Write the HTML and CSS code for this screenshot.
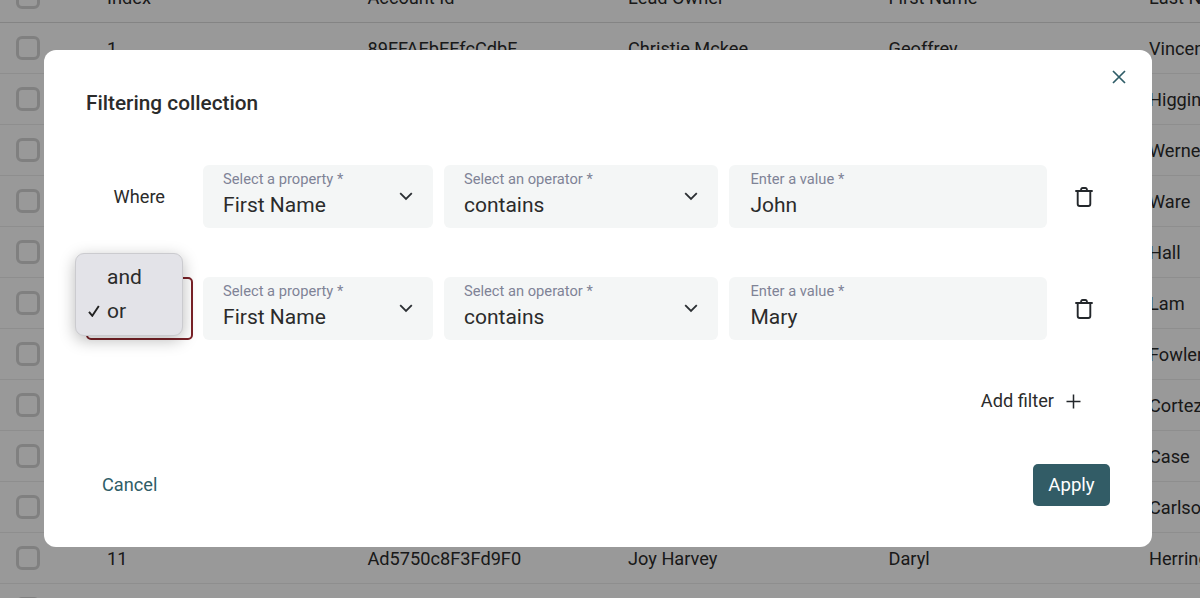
FILE: index.html
```html
<!DOCTYPE html>
<html lang="en">
<head>
  <meta charset="UTF-8" />
  <meta name="viewport" content="width=device-width, initial-scale=1.0"/>
  <title>Filtering collection</title>
  <link rel="stylesheet" href="styles.css">
</head>
<body>

  <div class="table">
    <div class="row head"><span class="check"></span><span>Index</span><span>Account Id</span><span>Lead Owner</span><span>First Name</span><span>Last Name</span></div>
    <div class="row"><span class="check"></span><span>1</span><span>89FFAEbEFfcCdbF</span><span>Christie Mckee</span><span>Geoffrey</span><span>Vincent</span></div>
    <div class="row"><span class="check"></span><span>2</span><span></span><span></span><span></span><span>Higgins</span></div>
    <div class="row"><span class="check"></span><span>3</span><span></span><span></span><span></span><span>Werner</span></div>
    <div class="row"><span class="check"></span><span>4</span><span></span><span></span><span></span><span>Ware</span></div>
    <div class="row"><span class="check"></span><span>5</span><span></span><span></span><span></span><span>Hall</span></div>
    <div class="row"><span class="check"></span><span>6</span><span></span><span></span><span></span><span>Lam</span></div>
    <div class="row"><span class="check"></span><span>7</span><span></span><span></span><span></span><span>Fowler</span></div>
    <div class="row"><span class="check"></span><span>8</span><span></span><span></span><span></span><span>Cortez</span></div>
    <div class="row"><span class="check"></span><span>9</span><span></span><span></span><span></span><span>Case</span></div>
    <div class="row"><span class="check"></span><span>10</span><span></span><span></span><span></span><span>Carlson</span></div>
    <div class="row"><span class="check"></span><span>11</span><span>Ad5750c8F3Fd9F0</span><span>Joy Harvey</span><span>Daryl</span><span>Herring</span></div>
    <div class="row"><span class="check"></span><span></span><span></span><span></span><span></span><span></span></div>
  </div>

  <div class="backdrop">
    <div class="modal">
      <button class="close" aria-label="Close">
        <svg width="14" height="14" viewBox="0 0 14 14"><path d="M1 1l12 12M13 1L1 13" fill="none" stroke="#2f5d67" stroke-width="1.7"/></svg>
      </button>

      <h2 class="title">Filtering collection</h2>

      <div class="filters">
        <div class="filter">
          <div class="where">Where</div>
          <div class="field">
            <label>Select a property *</label>
            <div class="value">First Name</div>
            <svg class="chev" width="14" height="9" viewBox="0 0 14 9"><path d="M1.2 1.2L7 7l5.8-5.8" fill="none" stroke="#2b2f33" stroke-width="1.8"/></svg>
          </div>
          <div class="field">
            <label>Select an operator *</label>
            <div class="value">contains</div>
            <svg class="chev" width="14" height="9" viewBox="0 0 14 9"><path d="M1.2 1.2L7 7l5.8-5.8" fill="none" stroke="#2b2f33" stroke-width="1.8"/></svg>
          </div>
          <div class="field input">
            <label>Enter a value *</label>
            <div class="value">John</div>
          </div>
          <svg class="trash" width="18" height="20" viewBox="0 0 18 20"><path d="M1 4h16M5.5 4l.6-1.8C6.3 1.5 6.9 1 7.6 1h2.8c.7 0 1.3.5 1.5 1.2l.6 1.8M2.7 4v13c0 1.1.9 2 2 2h8.6c1.1 0 2-.9 2-2V4" fill="none" stroke="#23272b" stroke-width="1.9" stroke-linecap="round"/></svg>
        </div>

        <div class="filter">
          <div class="conj">
            <div class="conj-box"></div>
            <div class="menu">
              <div class="opt">and</div>
              <div class="opt">
                <svg class="tick" width="12" height="12" viewBox="0 0 12 12"><path d="M1 6.8L4.3 10.8 10.8 1" fill="none" stroke="#222" stroke-width="1.9"/></svg>
                or
              </div>
            </div>
          </div>
          <div class="field">
            <label>Select a property *</label>
            <div class="value">First Name</div>
            <svg class="chev" width="14" height="9" viewBox="0 0 14 9"><path d="M1.2 1.2L7 7l5.8-5.8" fill="none" stroke="#2b2f33" stroke-width="1.8"/></svg>
          </div>
          <div class="field">
            <label>Select an operator *</label>
            <div class="value">contains</div>
            <svg class="chev" width="14" height="9" viewBox="0 0 14 9"><path d="M1.2 1.2L7 7l5.8-5.8" fill="none" stroke="#2b2f33" stroke-width="1.8"/></svg>
          </div>
          <div class="field input">
            <label>Enter a value *</label>
            <div class="value">Mary</div>
          </div>
          <svg class="trash" width="18" height="20" viewBox="0 0 18 20"><path d="M1 4h16M5.5 4l.6-1.8C6.3 1.5 6.9 1 7.6 1h2.8c.7 0 1.3.5 1.5 1.2l.6 1.8M2.7 4v13c0 1.1.9 2 2 2h8.6c1.1 0 2-.9 2-2V4" fill="none" stroke="#23272b" stroke-width="1.9" stroke-linecap="round"/></svg>
        </div>
      </div>

      <div class="add">
        Add filter
        <svg width="15" height="15" viewBox="0 0 15 15"><path d="M7.5 .5v14M.5 7.5h14" fill="none" stroke="#23272b" stroke-width="1.5"/></svg>
      </div>

      <div class="actions">
        <button class="cancel">Cancel</button>
        <button class="apply">Apply</button>
      </div>
    </div>
  </div>

</body>
</html>
```

FILE: styles.css
```css
body {
  margin: 0;
  background: white;
  overflow: hidden;
  height: 100vh;
  font-family: Roboto, sans-serif;
  color: #2b2b2b;
}

.table {
  margin-top: -28px;
  height: 626px;
  overflow: hidden;
}

.row {
  display: grid;
  grid-template-columns: 107px repeat(4, 260.5px) 1fr;
  align-items: center;
  height: 50px;
  border-bottom: 1px solid #ededed;
  font-size: 18.2px;
  white-space: nowrap;
}

.row.head {
  border-bottom-color: #dcdcdc;
}

.check {
  width: 18px;
  height: 18px;
  margin-left: 16px;
  border: 3px solid #d6d6d6;
  border-radius: 6px;
}

.backdrop {
  position: absolute;
  inset: 0;
  display: flex;
  justify-content: center;
  align-items: center;
  padding: 0 4px 1px 0;
  background: rgba(0, 0, 0, 0.4);
}

.modal {
  position: relative;
  box-sizing: border-box;
  width: 1108px;
  height: 497px;
  padding: 40px 42px 0;
  background: white;
  border-radius: 12px;
}

.close {
  position: absolute;
  top: 20px;
  right: 26px;
  padding: 0;
  border: 0;
  background: none;
  line-height: 0;
}

.title {
  margin: 0;
  font-size: 20.8px;
  line-height: 26px;
  font-weight: 500;
  color: #2b2b2b;
}

.filters {
  display: flex;
  flex-direction: column;
  gap: 49px;
  margin-top: 49px;
}

.filter {
  display: grid;
  grid-template-columns: 106.6px 230.4px 274.5px 318px auto;
  column-gap: 10.5px;
  align-items: center;
}

.where {
  font-size: 18.2px;
  text-align: center;
}

.field {
  position: relative;
  box-sizing: border-box;
  height: 63px;
  padding: 5px 20px 0;
  background: #f4f6f6;
  border-radius: 6px;
}

.field.input {
  padding-left: 21.5px;
}

.field label {
  display: block;
  font-size: 14.7px;
  line-height: 18px;
  color: #7f8396;
}

.value {
  margin-top: 3px;
  font-size: 21px;
  line-height: 28px;
  color: #2b2b2b;
}

.chev {
  position: absolute;
  top: 27px;
  right: 20px;
}

.trash {
  margin-left: 18px;
}

.conj {
  position: relative;
  height: 63px;
}

.conj-box {
  box-sizing: border-box;
  height: 63px;
  border: 2px solid #7a2228;
  border-radius: 5px;
}

.menu {
  position: absolute;
  top: -24px;
  left: -11px;
  box-sizing: border-box;
  width: 108px;
  height: 83px;
  padding: 6px 0 0 31px;
  background: #e3e3e8;
  border: 1px solid #cbcbcf;
  border-radius: 9px;
  box-shadow: 0 4px 16px rgba(0, 0, 0, 0.28);
  font-size: 21px;
}

.opt {
  position: relative;
  height: 34px;
  line-height: 34px;
}

.tick {
  position: absolute;
  top: 11px;
  left: -19px;
}

.add {
  display: flex;
  justify-content: flex-end;
  align-items: center;
  gap: 12px;
  margin-top: 50px;
  padding-right: 29px;
  font-size: 18.2px;
  line-height: 22px;
  color: #2b2b2b;
}

.actions {
  display: flex;
  justify-content: space-between;
  align-items: center;
  margin-top: 52px;
}

.cancel {
  margin: 0 0 2px 16px;
  padding: 0;
  border: 0;
  background: none;
  font: inherit;
  font-size: 18.2px;
  color: #2f5d67;
}

.apply {
  width: 77px;
  height: 42px;
  padding: 0;
  border: 0;
  border-radius: 5px;
  background: #325c66;
  font: inherit;
  font-size: 18.6px;
  color: white;
}
```
